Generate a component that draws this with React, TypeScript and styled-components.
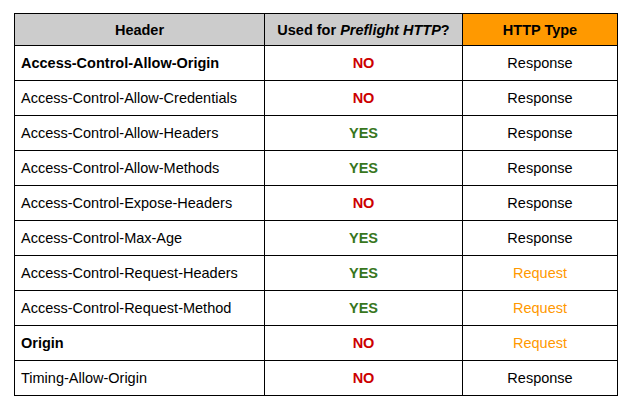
import React from 'react'
import styled, { createGlobalStyle } from 'styled-components'

const GlobalStyle = createGlobalStyle`
  body {
    margin: 0;
    background: #ffffff;
    font-family: 'Liberation Sans', Arial, sans-serif;
  }
`

const Page = styled.div`
  padding: 13px 0 0 14px;
`

const Table = styled.table`
  border-collapse: collapse;
  table-layout: fixed;
  width: 603px;
  font-size: 14.5px;
  color: #000;
`

const HeadCell = styled.th<{ $accent?: boolean }>`
  height: 31px;
  padding: 0;
  border: 1px solid #000;
  background: ${(p) => (p.$accent ? '#ff9900' : '#cccccc')};
  font-weight: bold;
  text-align: center;
`

const NameCell = styled.td<{ $bold?: boolean }>`
  height: 34px;
  padding: 0 0 0 6px;
  border: 1px solid #000;
  font-weight: ${(p) => (p.$bold ? 'bold' : 'normal')};
`

const FlagCell = styled.td<{ $yes: boolean }>`
  padding: 0;
  border: 1px solid #000;
  text-align: center;
  font-weight: bold;
  color: ${(p) => (p.$yes ? '#38761d' : '#cc0000')};
`

const TypeCell = styled.td<{ $request: boolean }>`
  padding: 0;
  border: 1px solid #000;
  text-align: center;
  color: ${(p) => (p.$request ? '#ff9900' : '#000')};
`

interface Row {
  name: string
  bold?: boolean
  preflight: boolean
  request?: boolean
}

const rows: Row[] = [
  { name: 'Access-Control-Allow-Origin', bold: true, preflight: false },
  { name: 'Access-Control-Allow-Credentials', preflight: false },
  { name: 'Access-Control-Allow-Headers', preflight: true },
  { name: 'Access-Control-Allow-Methods', preflight: true },
  { name: 'Access-Control-Expose-Headers', preflight: false },
  { name: 'Access-Control-Max-Age', preflight: true },
  { name: 'Access-Control-Request-Headers', preflight: true, request: true },
  { name: 'Access-Control-Request-Method', preflight: true, request: true },
  { name: 'Origin', bold: true, preflight: false, request: true },
  { name: 'Timing-Allow-Origin', preflight: false }
]

export default function App() {
  return (
    <Page>
      <GlobalStyle />
      <Table>
        <colgroup>
          <col style={{ width: 250 }} />
          <col style={{ width: 198 }} />
          <col style={{ width: 155 }} />
        </colgroup>
        <thead>
          <tr>
            <HeadCell>Header</HeadCell>
            <HeadCell>
              Used for <i>Preflight HTTP</i>?
            </HeadCell>
            <HeadCell $accent>HTTP Type</HeadCell>
          </tr>
        </thead>
        <tbody>
          {rows.map((r) => (
            <tr key={r.name}>
              <NameCell $bold={r.bold}>{r.name}</NameCell>
              <FlagCell $yes={r.preflight}>{r.preflight ? 'YES' : 'NO'}</FlagCell>
              <TypeCell $request={!!r.request}>{r.request ? 'Request' : 'Response'}</TypeCell>
            </tr>
          ))}
        </tbody>
      </Table>
    </Page>
  )
}
